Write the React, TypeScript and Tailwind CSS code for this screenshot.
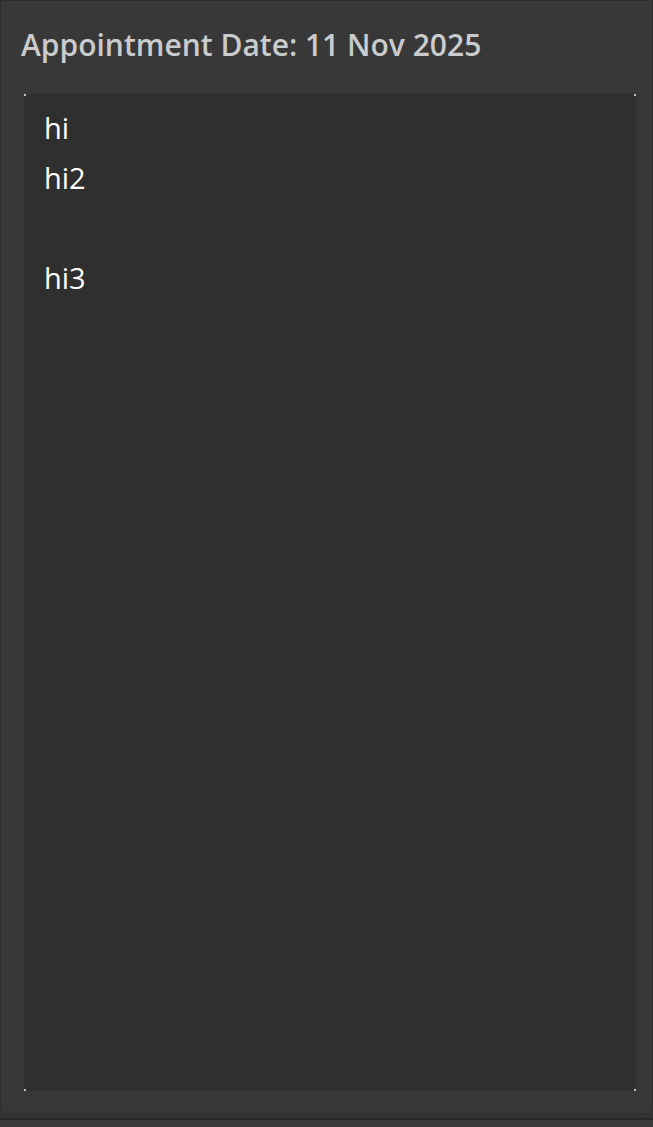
import React from "react";

export default function App() {
  return (
    <div className="h-[1127px] w-[653px] overflow-hidden bg-[#3a3a3a]" style={{ fontFamily: '"Open Sans", "Noto Sans", sans-serif' }}>
      <div className="flex h-[1118px] flex-col bg-[#333333]">
        <div className="flex h-[1114px] flex-col rounded-b-md border border-[#2d2d2d] bg-[#383838]">
          <div className="flex h-[93px] items-start pl-[20px] pt-[24px]">
            <h1 className="text-[30px] font-semibold leading-[40px] text-[#c9cbcd]">Appointment Date: 11 Nov 2025</h1>
          </div>
          <div className="relative ml-[23px] mr-[16px] h-[997px] bg-[#2f2f2f] px-[20px] pt-[9px]">
            <span className="absolute left-0 top-0 h-[2px] w-[2px] bg-white/70" />
            <span className="absolute right-0 top-0 h-[2px] w-[2px] bg-white/70" />
            <span className="absolute bottom-0 left-0 h-[2px] w-[2px] bg-white/70" />
            <span className="absolute bottom-0 right-0 h-[2px] w-[2px] bg-white/70" />
            <div className="whitespace-pre-line text-[29px] leading-[50px] text-white">{"hi\nhi2\n\u00a0\nhi3"}</div>
          </div>
        </div>
      </div>
      <div className="h-[2px] bg-[#262626]" />
    </div>
  );
}
